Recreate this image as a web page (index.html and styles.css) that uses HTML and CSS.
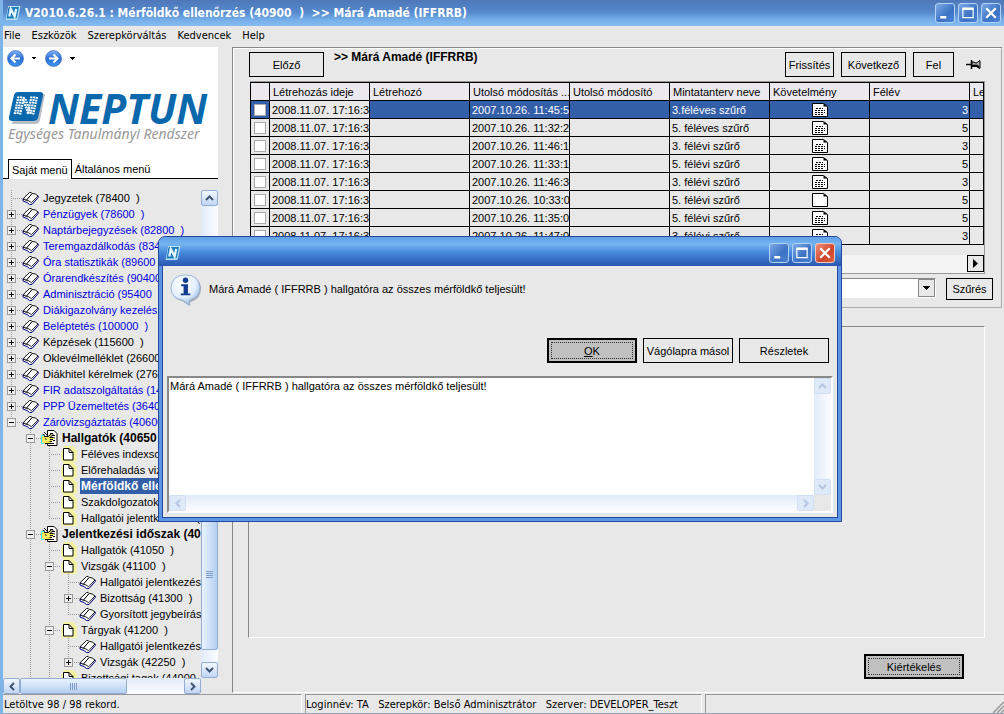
FILE: index.html
```html
<!DOCTYPE html>
<html lang="hu">
<head>
<meta charset="utf-8">
<title>Neptun</title>
<link rel="stylesheet" href="styles.css">
</head>
<body>
<svg class="defs" aria-hidden="true">
  <defs>
    <linearGradient id="ball" x1="0" y1="0" x2="0" y2="1"><stop offset="0" stop-color="#7fb4f5"/><stop offset=".5" stop-color="#2d6fd6"/><stop offset="1" stop-color="#3f97ee"/></linearGradient>
    <radialGradient id="bubble" cx=".4" cy=".3" r=".75"><stop offset="0" stop-color="#ffffff"/><stop offset=".6" stop-color="#e3effb"/><stop offset="1" stop-color="#8fb6e2"/></radialGradient>
    <symbol id="book" viewBox="0 0 17 14"><path d="M1 8.500v1.500l4 1.500L7.500 13.500h2.500L16.200 6.500V5z" fill="#fff" stroke="#000080"/><path d="M.8 8 7.500 1.500Q9.500.8 10.200 2.500L4.300 9.300Q3 8 .8 8z" fill="#fff" stroke="#000" stroke-width=".9"/><path d="M4.300 9.300 10.200 2.500Q13 2 16 5L9.500 11.800Q7 9.300 4.300 9.300z" fill="#fff" stroke="#000" stroke-width=".9"/></symbol>
    <symbol id="page" viewBox="0 0 17 16"><path d="M4 0h9l4 4v11l-2 1H4L1 15l1-4-1-3 1-3z" fill="#f3f2a0"/><path d="M3.500 2.500h5.500l4 4v7.500H3.500z" fill="#fff" stroke="#000"/><path d="M9 2.500v4h4" fill="none" stroke="#000"/></symbol>
    <symbol id="hand" viewBox="0 0 17 16"><path d="M6.500.5h6.500l3 3v12h-9.500z" fill="#fff" stroke="#000"/><path d="M9 3.500h3M11 5.500h3M12 8h2M12 10.500h2M9 13.500h4" stroke="#000"/><path d="M1 6h6l3-2 1 1-2 2.500h4v1.500h-1v1.500h-1V12h-1v2H4L1 12z" fill="#f4ea62"/><path d="M3 6.500h4L10.500 4M8.500 7.500h4M9 9.500h3M8.500 11.500H11M4 13.500h6M4 8.500l1.500 1M12.500 4l-3 3" stroke="#000" fill="none"/><path d="M3 2l3.500 3.500M1.500 4 4 5.500" stroke="#111"/><path d="M3 5.500H.5v8H3" stroke="#4be6e6" fill="none"/></symbol>
    <symbol id="list" viewBox="0 0 16 14"><path d="M.5.5h11l4 3v10H.5z" fill="#fff" stroke="#000"/><path d="M11.500.5v3h4z" fill="#000"/><path d="M4 5.500h7M3 7.500h10M3 9.500h10M3 11.500h8" stroke="#000" stroke-dasharray="2 1"/></symbol>
    <symbol id="blank" viewBox="0 0 16 14"><path d="M.5.5h11l4 3v10H.5z" fill="#fff" stroke="#000"/><path d="M11.500.5v3h4z" fill="#000"/></symbol>
    <symbol id="mark" viewBox="0 0 16 14"><path d="M4 0h11.500L13 12.500Q12.500 14 11 14H.5L3 1.500Q3 0 4 0z" fill="#bfe0f5"/><path d="M4 1h10L12 11.500q-.3 1-1.200 1H1.500L3.300 2z" fill="#1f80be"/><path d="M4.300 10.500 5.800 3l3.800 7.500L11.200 3" fill="none" stroke="#eaf5fc" stroke-width="2.200"/></symbol>
    <symbol id="up" viewBox="0 0 9 6"><path d="M1 5l3.500-3.500L8 5" fill="none" stroke="currentColor" stroke-width="2"/></symbol>
    <symbol id="down" viewBox="0 0 9 6"><path d="M1 1l3.500 3.500L8 1" fill="none" stroke="currentColor" stroke-width="2"/></symbol>
    <symbol id="left" viewBox="0 0 6 9"><path d="M5 1 1.500 4.500 5 8" fill="none" stroke="currentColor" stroke-width="2"/></symbol>
    <symbol id="right" viewBox="0 0 6 9"><path d="M1 1l3.500 3.500L1 8" fill="none" stroke="currentColor" stroke-width="2"/></symbol>
  </defs>
</svg>

<header class="titlebar">
  <svg class="app-icon"><use href="#mark"/></svg>
  <h1 class="title">V2010.6.26.1 : Mérföldkő ellenőrzés (40900&nbsp; )&nbsp; &gt;&gt; Márá Amadé (IFFRRB)</h1>
  <button class="win-btn" aria-label="Kis méret"><svg viewBox="0 0 21 21"><path d="M5 15.500h7" stroke="#fff" stroke-width="3"/></svg></button>
  <button class="win-btn" aria-label="Teljes méret"><svg viewBox="0 0 21 21"><path d="M4.500 5v11h12V5" fill="none" stroke="#fff" stroke-width="1.400"/><path d="M4 5.500h13" stroke="#fff" stroke-width="3"/></svg></button>
  <button class="win-btn" aria-label="Bezárás"><svg viewBox="0 0 21 21"><path d="M5 5l11 11M16 5 5 16" stroke="#fff" stroke-width="2.600"/></svg></button>
</header>

<nav class="menubar">
  <a href="#">File</a><a href="#">Eszközök</a><a href="#">Szerepkörváltás</a><a href="#">Kedvencek</a><a href="#">Help</a>
</nav>

<div class="workspace">
  <aside class="sidebar">
    <div class="brand">
      <div class="history">
        <button class="nav-btn" aria-label="Vissza"><svg viewBox="0 0 17 17"><circle cx="8.500" cy="8.500" r="8" fill="url(#ball)" stroke="#2c62b8" stroke-width=".6"/><path d="M13 8.500H5M8.500 4.500l-4 4 4 4" fill="none" stroke="#fff" stroke-width="2"/></svg></button>
        <button class="drop-btn" aria-label="Előzmények"></button>
        <button class="nav-btn" aria-label="Előre"><svg viewBox="0 0 17 17"><circle cx="8.500" cy="8.500" r="8" fill="url(#ball)" stroke="#2c62b8" stroke-width=".6"/><path d="M4 8.500h8M8.500 4.500l4 4-4 4" fill="none" stroke="#fff" stroke-width="2"/></svg></button>
        <button class="drop-btn" aria-label="Következők"></button>
      </div>
      <div class="logo">
        <svg class="logo-mark" viewBox="0 0 36 32"><path d="M8 2h28l-5 26q-1 4-4 4H3z" fill="#b9bfc6"/><path d="M9 0h22q4 0 3 4l-5 22q-1 3-5 3H3q-4 0-3-4L5 3q1-3 4-3z" fill="#0a68ac"/><g fill="none" stroke="#fff" stroke-width="2.200" stroke-dasharray="1.800 .9"><path d="M9.500 4.500 5.500 23M12.300 4.500 8.300 23M15 5l-4 18"/><path d="M14 7l5 14M16.500 7l5 14"/><path d="M22.500 4.500l-4 18.500M25.300 4.500l-4 18.500M28 5l-4 18"/></g></svg>
        <span class="logo-name">NEPTUN</span>
      </div>
      <div class="slogan">Egységes Tanulmányi Rendszer</div>
      <div class="tabs" role="tablist">
        <button class="tab active" role="tab" aria-selected="true">Saját menü</button>
        <button class="tab" role="tab" aria-selected="false">Általános menü</button>
      </div>
    </div>

    <div class="tree-area">
      <ul class="tree">
        <li><i class="g"></i><svg class="bk"><use href="#book"/></svg><span>Jegyzetek (78400&nbsp; )</span></li>
        <li class="blue"><i class="g"><b class="plus"></b></i><svg class="bk"><use href="#book"/></svg><span>Pénzügyek (78600&nbsp; )</span></li>
        <li class="blue"><i class="g"><b class="plus"></b></i><svg class="bk"><use href="#book"/></svg><span>Naptárbejegyzések (82800&nbsp; )</span></li>
        <li class="blue"><i class="g"><b class="plus"></b></i><svg class="bk"><use href="#book"/></svg><span>Teremgazdálkodás (83400&nbsp; )</span></li>
        <li class="blue"><i class="g"><b class="plus"></b></i><svg class="bk"><use href="#book"/></svg><span>Óra statisztikák (89600&nbsp; )</span></li>
        <li class="blue"><i class="g"><b class="plus"></b></i><svg class="bk"><use href="#book"/></svg><span>Órarendkészítés (90400&nbsp; )</span></li>
        <li class="blue"><i class="g"><b class="plus"></b></i><svg class="bk"><use href="#book"/></svg><span>Adminisztráció (95400&nbsp; )</span></li>
        <li class="blue"><i class="g"><b class="plus"></b></i><svg class="bk"><use href="#book"/></svg><span>Diákigazolvány kezelés</span></li>
        <li class="blue"><i class="g"><b class="plus"></b></i><svg class="bk"><use href="#book"/></svg><span>Beléptetés (100000&nbsp; )</span></li>
        <li><i class="g"><b class="plus"></b></i><svg class="bk"><use href="#book"/></svg><span>Képzések (115600&nbsp; )</span></li>
        <li><i class="g"><b class="plus"></b></i><svg class="bk"><use href="#book"/></svg><span>Oklevélmelléklet (26600</span></li>
        <li><i class="g"><b class="plus"></b></i><svg class="bk"><use href="#book"/></svg><span>Diákhitel kérelmek (27600</span></li>
        <li class="blue"><i class="g"><b class="plus"></b></i><svg class="bk"><use href="#book"/></svg><span>FIR adatszolgáltatás (14</span></li>
        <li class="blue"><i class="g"><b class="plus"></b></i><svg class="bk"><use href="#book"/></svg><span>PPP Üzemeltetés (36400</span></li>
        <li class="blue"><i class="g end"><b class="minus"></b></i><svg class="bk"><use href="#book"/></svg><span>Záróvizsgáztatás (40600</span></li>
        <li class="strong"><i class="g none"></i><i class="g"><b class="minus"></b></i><svg class="hd"><use href="#hand"/></svg><span>Hallgatók (40650&nbsp; )</span></li>
        <li><i class="g none"></i><i class="g bar"></i><i class="g"></i><svg class="pg"><use href="#page"/></svg><span>Féléves indexsor</span></li>
        <li><i class="g none"></i><i class="g bar"></i><i class="g"></i><svg class="pg"><use href="#page"/></svg><span>Előrehaladás vizs</span></li>
        <li class="strong picked"><i class="g none"></i><i class="g bar"></i><i class="g"></i><svg class="pg"><use href="#page"/></svg><span>Mérföldkő ellenőrzés</span></li>
        <li><i class="g none"></i><i class="g bar"></i><i class="g"></i><svg class="pg"><use href="#page"/></svg><span>Szakdolgozatok</span></li>
        <li><i class="g none"></i><i class="g bar"></i><i class="g end"></i><svg class="pg"><use href="#page"/></svg><span>Hallgatói jelentkezések (</span></li>
        <li class="strong"><i class="g none"></i><i class="g"><b class="minus"></b></i><svg class="hd"><use href="#hand"/></svg><span>Jelentkezési időszak (40</span></li>
        <li><i class="g none"></i><i class="g bar"></i><i class="g"></i><svg class="pg"><use href="#page"/></svg><span>Hallgatók (41050&nbsp; )</span></li>
        <li><i class="g none"></i><i class="g bar"></i><i class="g"><b class="minus"></b></i><svg class="pg"><use href="#page"/></svg><span>Vizsgák (41100&nbsp; )</span></li>
        <li><i class="g none"></i><i class="g bar"></i><i class="g bar"></i><i class="g"></i><svg class="bk"><use href="#book"/></svg><span>Hallgatói jelentkezése</span></li>
        <li><i class="g none"></i><i class="g bar"></i><i class="g bar"></i><i class="g"><b class="plus"></b></i><svg class="bk"><use href="#book"/></svg><span>Bizottság (41300&nbsp; )</span></li>
        <li><i class="g none"></i><i class="g bar"></i><i class="g bar"></i><i class="g end"></i><svg class="bk"><use href="#book"/></svg><span>Gyorsított jegybeírás</span></li>
        <li><i class="g none"></i><i class="g bar"></i><i class="g"><b class="minus"></b></i><svg class="pg"><use href="#page"/></svg><span>Tárgyak (41200&nbsp; )</span></li>
        <li><i class="g none"></i><i class="g bar"></i><i class="g bar"></i><i class="g"></i><svg class="bk"><use href="#book"/></svg><span>Hallgatói jelentkezése</span></li>
        <li><i class="g none"></i><i class="g bar"></i><i class="g bar"></i><i class="g end"><b class="plus"></b></i><svg class="bk"><use href="#book"/></svg><span>Vizsgák (42250&nbsp; )</span></li>
        <li><i class="g none"></i><i class="g bar"></i><i class="g"></i><svg class="pg"><use href="#page"/></svg><span>Bizottsági tagok (44000&nbsp; )</span></li>
      </ul>
      <div class="vscroll">
        <button class="sb" aria-label="Fel"><svg class="chev-v"><use href="#up"/></svg></button>
        <div class="track"><div class="thumb tree-thumb-v"><i class="grip"></i></div></div>
        <button class="sb" aria-label="Le"><svg class="chev-v"><use href="#down"/></svg></button>
      </div>
      <div class="hscroll">
        <button class="sb" aria-label="Balra"><svg class="chev-h"><use href="#left"/></svg></button>
        <div class="track"><div class="thumb tree-thumb-h"><i class="grip"></i></div></div>
        <button class="sb" aria-label="Jobbra"><svg class="chev-h"><use href="#right"/></svg></button>
      </div>
    </div>
  </aside>

  <main class="content">
    <section class="list-panel">
      <div class="toolbar">
        <button class="btn prev">Előző</button>
        <h2 class="subject">&gt;&gt; Márá Amadé (IFFRRB)</h2>
        <button class="btn refresh">Frissítés</button>
        <button class="btn next">Következő</button>
        <button class="btn parent">Fel</button>
        <button class="pin" aria-label="Rögzítés"><svg viewBox="0 0 15 11"><path d="M0 5.500h5M5.500 1v9" stroke="#000" stroke-width="1.500"/><path d="M6 3h2l1 .8h2l2-2h1v7.500h-1l-2-2H6z" fill="#aaa" stroke="#000"/><path d="M6 6.800h5l2 2" stroke="#000" stroke-width="2" fill="none"/></svg></button>
      </div>
      <div class="grid-frame">
        <table class="grid">
          <colgroup><col class="c-check"><col class="c"><col class="c"><col class="c"><col class="c"><col class="c"><col class="c"><col class="c"><col></colgroup>
          <thead><tr><th></th><th>Létrehozás ideje</th><th>Létrehozó</th><th>Utolsó módosítás ...</th><th>Utolsó módosító</th><th>Mintatanterv neve</th><th>Követelmény</th><th>Félév</th><th>Le</th></tr></thead>
          <tbody>
            <tr class="selected"><td><input type="checkbox" aria-label="1. sor"></td><td class="focus">2008.11.07. 17:16:35</td><td></td><td>2007.10.26. 11:45:50</td><td></td><td>3.féléves szűrő</td><td class="ic"><svg><use href="#list"/></svg></td><td class="num">3</td><td></td></tr>
            <tr><td><input type="checkbox" aria-label="2. sor"></td><td>2008.11.07. 17:16:35</td><td></td><td>2007.10.26. 11:32:20</td><td></td><td>5. féléves szűrő</td><td class="ic"><svg><use href="#list"/></svg></td><td class="num">5</td><td></td></tr>
            <tr><td><input type="checkbox" aria-label="3. sor"></td><td>2008.11.07. 17:16:35</td><td></td><td>2007.10.26. 11:46:10</td><td></td><td>3. félévi szűrő</td><td class="ic"><svg><use href="#list"/></svg></td><td class="num">3</td><td></td></tr>
            <tr><td><input type="checkbox" aria-label="4. sor"></td><td>2008.11.07. 17:16:35</td><td></td><td>2007.10.26. 11:33:10</td><td></td><td>5. félévi szűrő</td><td class="ic"><svg><use href="#list"/></svg></td><td class="num">5</td><td></td></tr>
            <tr><td><input type="checkbox" aria-label="5. sor"></td><td>2008.11.07. 17:16:35</td><td></td><td>2007.10.26. 11:46:30</td><td></td><td>3. félévi szűrő</td><td class="ic"><svg><use href="#list"/></svg></td><td class="num">3</td><td></td></tr>
            <tr><td><input type="checkbox" aria-label="6. sor"></td><td>2008.11.07. 17:16:35</td><td></td><td>2007.10.26. 10:33:00</td><td></td><td>5. félévi szűrő</td><td class="ic"><svg><use href="#blank"/></svg></td><td class="num">5</td><td></td></tr>
            <tr><td><input type="checkbox" aria-label="7. sor"></td><td>2008.11.07. 17:16:35</td><td></td><td>2007.10.26. 11:35:00</td><td></td><td>5. félévi szűrő</td><td class="ic"><svg><use href="#list"/></svg></td><td class="num">5</td><td></td></tr>
            <tr><td><input type="checkbox" aria-label="8. sor"></td><td>2008.11.07. 17:16:35</td><td></td><td>2007.10.26. 11:47:00</td><td></td><td>3. félévi szűrő</td><td class="ic"><svg><use href="#list"/></svg></td><td class="num">3</td><td></td></tr>
          </tbody>
        </table>
        <div class="grid-scroll"><button class="grid-right" aria-label="Jobbra"><svg viewBox="0 0 5 9"><path d="M0 0l5 4.500L0 9z"/></svg></button></div>
      </div>
      <div class="filter">
        <select class="combo" aria-label="Szűrő"><option></option></select>
        <button class="btn search">Szűrés</button>
      </div>
    </section>
    <section class="detail"></section>
    <div class="actions"><button class="btn default evaluate">Kiértékelés</button></div>
  </main>
</div>

<footer class="statusbar">
  <div class="cell records">Letöltve 98 / 98 rekord.</div>
  <div class="cell session">Loginnév: TA&nbsp;&nbsp; Szerepkör: Belső Adminisztrátor&nbsp;&nbsp; Szerver: DEVELOPER_Teszt</div>
  <div class="cell rest"><svg class="resize" viewBox="0 0 12 12"><path d="M1 12 12 1M5 12l7-7M9 12l3-3" stroke="#999" stroke-width="1.500"/></svg></div>
</footer>

<div class="dialog" role="dialog" aria-label="Üzenet">
  <div class="dialog-title">
    <svg class="app-icon"><use href="#mark"/></svg>
    <button class="win-btn" aria-label="Kis méret"><svg viewBox="0 0 21 21"><path d="M5 15.500h7" stroke="#fff" stroke-width="3"/></svg></button>
    <button class="win-btn" aria-label="Teljes méret"><svg viewBox="0 0 21 21"><path d="M4.500 5v11h12V5" fill="none" stroke="#fff" stroke-width="1.400"/><path d="M4 5.500h13" stroke="#fff" stroke-width="3"/></svg></button>
    <button class="win-btn close" aria-label="Bezárás"><svg viewBox="0 0 21 21"><path d="M5 5l11 11M16 5 5 16" stroke="#fff" stroke-width="2.600"/></svg></button>
  </div>
  <div class="dialog-body">
    <div class="message">
      <svg class="info" viewBox="0 0 34 34"><path d="M4 8Q8 2 17 2q14 0 15 13 0 11-11 14l-1 4-7-5Q4 26 2 18z" fill="#7f8b99" opacity=".6"/><path d="M16 1q14 0 15 13 0 10-11 13v5l-7-5Q1 25 1 14 2 1 16 1z" fill="url(#bubble)" stroke="#88a6cc" stroke-width=".8"/><circle cx="16" cy="6.500" r="2.800" fill="#123c94"/><path d="M11.500 10.500H18.500V20H21v2H11v-2h3v-7.500h-2.500z" fill="#123c94"/></svg>
      <p>Márá Amadé ( IFFRRB ) hallgatóra az összes mérföldkő teljesült!</p>
    </div>
    <div class="dialog-buttons">
      <button class="btn default wide"><u>O</u>K</button>
      <button class="btn wide">Vágólapra másol</button>
      <button class="btn wide">Részletek</button>
    </div>
    <div class="memo">
      <textarea aria-label="Részletes üzenet" readonly>Márá Amadé ( IFFRRB ) hallgatóra az összes mérföldkő teljesült!</textarea>
      <div class="vscroll off">
        <button class="sb" aria-label="Fel"><svg class="chev-v"><use href="#up"/></svg></button>
        <div class="track"></div>
        <button class="sb" aria-label="Le"><svg class="chev-v"><use href="#down"/></svg></button>
      </div>
      <div class="hscroll off">
        <button class="sb" aria-label="Balra"><svg class="chev-h"><use href="#left"/></svg></button>
        <div class="track"></div>
        <button class="sb" aria-label="Jobbra"><svg class="chev-h"><use href="#right"/></svg></button>
      </div>
    </div>
  </div>
</div>
</body>
</html>
```
FILE: styles.css
```css
* { box-sizing: border-box; }

body {
  margin: 0;
  height: 100vh;
  display: flex;
  flex-direction: column;
  overflow: hidden;
  position: relative;
  border-left: 3px solid #7db4ea;
  border-bottom: 1px solid #8fa6c0;
  background: #e8e8e8;
  color: #000;
  font: 11px/16px "Liberation Sans", Arial, sans-serif;
}

button, input, select, textarea { font: inherit; color: inherit; margin: 0; padding: 0; border-radius: 0; }
button { cursor: default; }
.defs { position: absolute; width: 0; height: 0; }

/* window chrome */
.titlebar {
  flex: none;
  height: 26px;
  margin-left: -3px;
  padding: 0 3px 0 5px;
  display: flex;
  align-items: center;
  gap: 3px;
  background: linear-gradient(#4f78ba, #5488cc 45%, #78b2ea 80%, #86bcee);
}
.app-icon { width: 16px; height: 14px; flex: none; }
.title {
  flex: 1;
  margin: 0 0 0 1px;
  color: #fff;
  font: bold 12px/20px "DejaVu Sans Condensed", "DejaVu Sans", sans-serif;
  white-space: nowrap;
}
.win-btn {
  width: 20px;
  height: 20px;
  flex: none;
  border: 1px solid #b4d2f4;
  border-radius: 3px;
  background: linear-gradient(135deg, #7aaae6, #3c72c4 60%, #4a84d6);
}
.win-btn svg { display: block; width: 18px; height: 18px; }
.win-btn.close { background: linear-gradient(135deg, #f0907c, #d0452c 60%, #dc6040); border-color: #f4c8c0; }

.menubar {
  flex: none;
  height: 20px;
  display: flex;
  gap: 11px;
  padding-left: 1px;
  line-height: 19px;
  font-family: "DejaVu Sans Condensed", "DejaVu Sans", sans-serif;
}
.menubar a { color: #000; text-decoration: none; }

.workspace { flex: 1; min-height: 0; display: flex; gap: 14px; }

/* sidebar */
.sidebar { flex: none; width: 215px; display: flex; flex-direction: column; min-height: 0; }
.brand { flex: none; height: 132px; margin-top: 1px; background: #fff; display: flex; flex-direction: column; }
.history { display: flex; align-items: center; gap: 6px; padding: 3px 0 0 4px; }
.nav-btn { width: 17px; height: 17px; border: 0; background: none; }
.nav-btn svg { display: block; }
.drop-btn { width: 9px; height: 9px; border: 0; background: conic-gradient(from -45deg at 50% 100%, #000 25%, transparent 0) no-repeat 1px 3px / 6px 3px; }
.logo { display: flex; align-items: center; gap: 3px; padding-left: 6px; height: 34px; margin-top: 24px; }
.logo-mark { width: 36px; height: 32px; flex: none; }
.logo-name { color: #0a68ac; font: italic bold 41px/34px "Open Sans", "Noto Sans", sans-serif; }
.slogan { padding: 0 0 0 5px; color: #999; font: italic 14px/18px "Noto Sans", sans-serif; white-space: nowrap; }
.tabs { margin-top: auto; display: flex; align-items: flex-end; }
.tabs::before, .tabs::after { content: ""; width: 5px; border-bottom: 1px solid #000; }
.tabs::after { flex: 1; }
.tab { height: 19px; border: 0; border-bottom: 1px solid #000; background: none; padding: 0 3px; white-space: nowrap; }
.tab.active { height: 20px; border: 1px solid #000; border-bottom: 0; }

.tree-area {
  flex: 1;
  min-height: 0;
  margin-top: 11px;
  display: grid;
  grid-template: minmax(0, 1fr) 16px / minmax(0, 1fr) 17px;
}
.tree { list-style: none; margin: 0; padding: 0; overflow: hidden; }
.tree li { height: 16px; display: flex; align-items: center; white-space: nowrap; }
.tree span { margin-left: 3px; padding: 0 1px; line-height: 16px; white-space: nowrap; }
.tree svg { flex: none; width: 17px; height: 16px; }
.tree .bk { height: 14px; }
.blue { color: #0000e0; }
.strong { font-weight: bold; font-size: 12px; }
.picked span { background: #335ea8; color: #fff; flex: 1; }
/* guide cells: dotted stem plus a dotted branch to the icon */
.g {
  flex: none;
  width: 19px;
  height: 16px;
  display: flex;
  align-items: center;
  padding-left: 4px;
  background:
    repeating-linear-gradient(#999 0 1px, transparent 1px 2px) 8px 0 / 1px 100% no-repeat,
    repeating-linear-gradient(90deg, #999 0 1px, transparent 1px 2px) 8px 8px / 11px 1px no-repeat;
}
.g.bar { background-size: 1px 100%, 0 0; }
.g.end { background-size: 1px 8px, 11px 1px; }
.g.none { background: none; }
.plus, .minus {
  width: 9px;
  height: 9px;
  border: 1px solid #999;
  background: linear-gradient(#000, #000) 1px 3px / 5px 1px no-repeat, #efefef;
}
.plus { background: linear-gradient(#000, #000) 1px 3px / 5px 1px no-repeat, linear-gradient(#000, #000) 3px 1px / 1px 5px no-repeat, #efefef; }

/* scroll bars */
.vscroll, .hscroll { display: flex; color: #3f5570; min-width: 0; min-height: 0; }
.vscroll { flex-direction: column; background: linear-gradient(90deg, #e2ebfb, #fbfcff); }
.hscroll { background: linear-gradient(#e2ebfb, #fbfcff); }
.track { flex: 1; display: flex; min-width: 0; min-height: 0; }
.vscroll .track { flex-direction: column; justify-content: flex-end; padding-bottom: 12px; }
.sb {
  flex: none;
  width: 17px;
  height: 16px;
  display: flex;
  align-items: center;
  justify-content: center;
  border: 1px solid #93acd2;
  border-radius: 2px;
  background: linear-gradient(#f2f7ff, #c0d6f4);
}
.chev-v { width: 9px; height: 6px; }
.chev-h { width: 6px; height: 9px; }
.thumb { display: flex; align-items: center; justify-content: center; border: 1px solid #93acd2; border-radius: 2px; background: linear-gradient(#eaf3ff, #b4cff2); }
.tree-thumb-v { height: 152px; background: linear-gradient(90deg, #eaf3ff, #b4cff2); }
.tree-thumb-h { width: 107px; }
.grip { width: 7px; height: 7px; background: repeating-linear-gradient(90deg, #7f9cc8 0 1px, transparent 1px 2px); }
.tree-thumb-v .grip { background: repeating-linear-gradient(#7f9cc8 0 1px, transparent 1px 2px); }
.off { color: #b4c6e0; }
.off .sb { border-color: #d3e0f4; background: #deeafa; }

/* content */
.content {
  flex: 1;
  min-width: 0;
  display: flex;
  flex-direction: column;
  margin: 1px 2px 1px 0;
  border: 1px solid #888;
  border-width: 1px 0 0 1px;
  border-bottom: 1px solid #fff;
}
.list-panel { flex: none; height: 260px; border-bottom: 1px solid #aaa; border-right: 1px solid #aaa; padding: 4px 8px 0 16px; box-shadow: inset 1px 1px 0 #fff; }
.toolbar { display: flex; padding-right: 12px; }
.btn { height: 25px; border: 1px solid #000; background: transparent; white-space: nowrap; padding: 0; }
.prev { width: 75px; }
.subject { flex: 1; margin: 0 0 0 10px; font-size: 12px; line-height: 10px; white-space: nowrap; }
.refresh { width: 49px; }
.next { width: 65px; margin-left: 7px; }
.parent { width: 41px; margin-left: 7px; }
.pin { width: 15px; height: 25px; margin-left: 12px; border: 0; background: none; }
.pin svg { display: block; width: 15px; height: 11px; }

.grid-frame { margin: 4px 8px 0 1px; height: 193px; border: 1px solid #999; border-left: 0; overflow: hidden; display: flex; flex-direction: column; }
.grid { width: 100%; table-layout: fixed; border-collapse: collapse; }
.c-check { width: 19px; }
.c { width: 100px; }
.grid th, .grid td { height: 18px; padding: 0 0 0 2px; border: 1px solid #000; overflow: hidden; white-space: nowrap; text-align: left; font-weight: normal; line-height: 16px; }
.grid th { padding-left: 3px; background: #ece9ee; }
.grid input { appearance: none; display: block; width: 12px; height: 12px; margin-left: 1px; border: 1px solid #aaa; background: #fff; }
.selected td { background: #335ea8; color: #fff; }
.grid .focus { background: #e8e8e8; color: #000; }
.grid .ic { padding: 0; text-align: center; }
.ic svg { display: block; width: 16px; height: 14px; margin: 1px auto 0; }
.grid .num { padding-right: 1px; text-align: right; }
.grid-scroll { margin-top: auto; height: 18px; display: flex; justify-content: flex-end; background: #f4f4f4; }
.grid-right { width: 17px; height: 17px; border: 1px solid #000; background: #e8e8e8; display: flex; align-items: center; justify-content: center; }
.grid-right svg { width: 5px; height: 9px; }

.filter { display: flex; justify-content: flex-end; gap: 10px; margin-top: 4px; }
.combo {
  appearance: none;
  width: 400px;
  height: 20px;
  border: 1px solid;
  border-color: #888 #fff #fff #888;
  background:
    conic-gradient(from -45deg at 50% 100%, #000 25%, transparent 0) no-repeat right 5px center / 7px 4px,
    linear-gradient(#e8e8e8, #e8e8e8) no-repeat right 1px top 1px / 15px 16px,
    linear-gradient(#888, #888) no-repeat right 0 top 0 / 17px 18px,
    #fff;
}
.search { width: 47px; height: 22px; }

.detail { flex: 1; min-height: 0; margin: 18px 17px 0 15px; border: 1px solid; border-color: #888 #fff #fff #888; }
.actions { flex: none; display: flex; justify-content: flex-end; padding: 16px 38px 13px; }
.default { border-width: 2px; background: #c0c0c0; outline: 1px dotted #333; outline-offset: -5px; }
.evaluate { width: 100px; }

/* status bar */
.statusbar { flex: none; height: 19px; display: flex; gap: 3px; font-family: "DejaVu Sans Condensed", "DejaVu Sans", sans-serif; }
.cell { border-top: 1px solid #999; border-left: 1px solid #999; border-right: 1px solid #fff; line-height: 19px; white-space: nowrap; overflow: hidden; }
.records { width: 299px; border-left: 0; padding-left: 1px; }
.session { width: 397px; }
.rest { flex: 1; display: flex; justify-content: flex-end; align-items: flex-end; border-right: 0; }
.resize { width: 12px; height: 12px; }

/* dialog */
.dialog {
  position: absolute;
  left: 155px;
  right: 162px;
  top: 236px;
  border: 1px solid #24489a;
  border-radius: 7px 7px 0 0;
  background: #5c96e6;
  padding: 0 3px 3px;
}
.dialog-title {
  height: 29px;
  margin: 0 -3px;
  padding: 2px 6px 0;
  display: flex;
  align-items: center;
  gap: 3px;
  border-radius: 6px 6px 0 0;
  background: linear-gradient(#62a0e8, #74b4f0 25%, #4488dc 55%, #2a56ae);
}
.dialog-title .app-icon { margin: 0 auto 0 0; }
.dialog-body { border: 1px solid #24489a; border-top: 0; background: #e8e8e8; padding: 8px 4px 4px; }
.message { display: flex; gap: 6px; height: 64px; padding-left: 3px; }
.message p { margin: 7px 0 0; }
.info { width: 33px; height: 33px; }
.dialog-buttons { display: flex; justify-content: flex-end; gap: 6px; padding-right: 4px; }
.wide { width: 90px; }
.memo {
  height: 137px;
  margin-top: 13px;
  display: grid;
  grid-template: minmax(0, 1fr) 16px / minmax(0, 1fr) 17px;
  border: 2px solid;
  border-color: #888 #fff #fff #888;
}
.memo textarea { border: 0; resize: none; overflow: hidden; outline: 0; background: #fff; padding: 0 1px; line-height: 16px; }
```
